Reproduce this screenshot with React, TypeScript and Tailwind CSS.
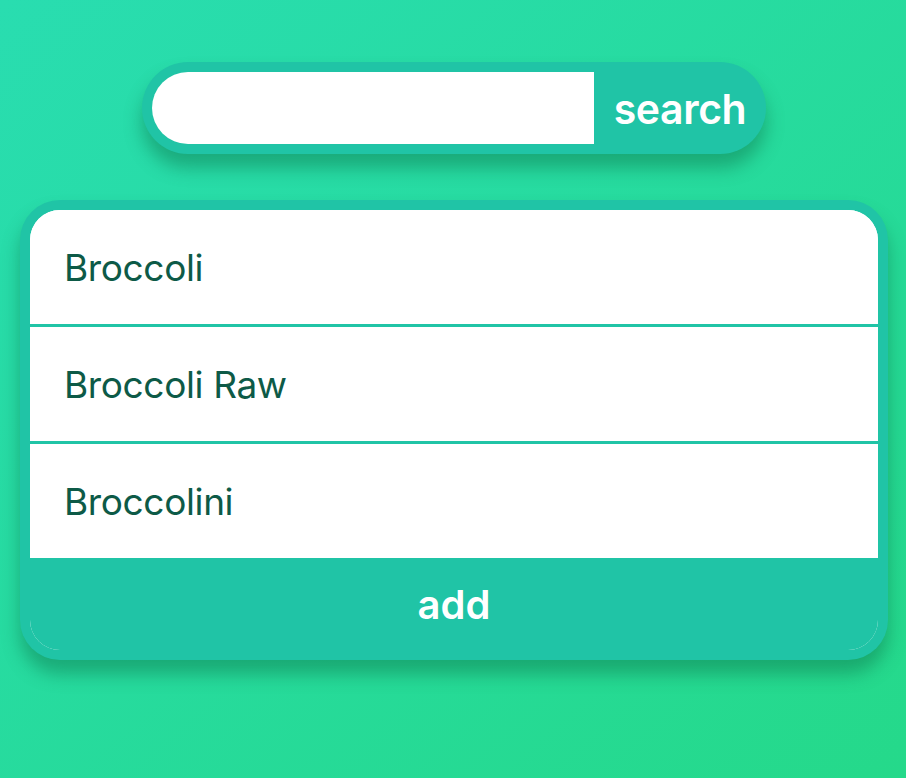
import { useState } from "react";

const results = ["Broccoli", "Broccoli Raw", "Broccolini"];

const App = () => {
  const [query, setQuery] = useState("");

  return (
    <div
      className="min-h-screen w-full bg-gradient-to-br from-[#29ddb0] to-[#25d98a] flex flex-col items-start pt-[62px]"
      style={{ fontFamily: "Inter, 'Noto Sans', sans-serif" }}
    >
      {/* Search pill */}
      <div className="ml-[142px] w-[624px] h-[92px] p-[10px] rounded-full bg-[#20c4a6] flex shadow-[0_14px_18px_rgba(10,110,70,0.45)]">
        <input
          value={query}
          onChange={(e) => setQuery(e.target.value)}
          className="w-[442px] h-full bg-white rounded-l-[36px] outline-none px-6 text-[28px] text-[#0d5a47]"
        />
        <button className="flex-1 text-white text-[41px] font-semibold tracking-[-0.01em] leading-none pl-[10px] pt-[2px]">
          search
        </button>
      </div>

      {/* Results card */}
      <div className="mt-[46px] ml-[20px] w-[868px] p-[10px] rounded-[40px] bg-[#20c4a6] shadow-[0_14px_18px_rgba(10,110,70,0.45)]">
        <div className="rounded-[30px] overflow-hidden bg-white flex flex-col">
          {results.map((name, i) => (
            <div
              key={name}
              className={
                i < results.length - 1
                  ? "h-[117px] bg-white flex items-center pl-[34px] pt-[2px] border-b-[3px] border-[#20c4a6]"
                  : "h-[114px] bg-white flex items-center pl-[34px] pt-[2px]"
              }
            >
              <span className="text-[37px] text-[#0d5a47] tracking-[-0.01em]">{name}</span>
            </div>
          ))}
          <button className="h-[92px] bg-[#20c4a6] text-white text-[40px] font-semibold leading-none pt-[2px]">
            add
          </button>
        </div>
      </div>
    </div>
  );
};

export default App;
